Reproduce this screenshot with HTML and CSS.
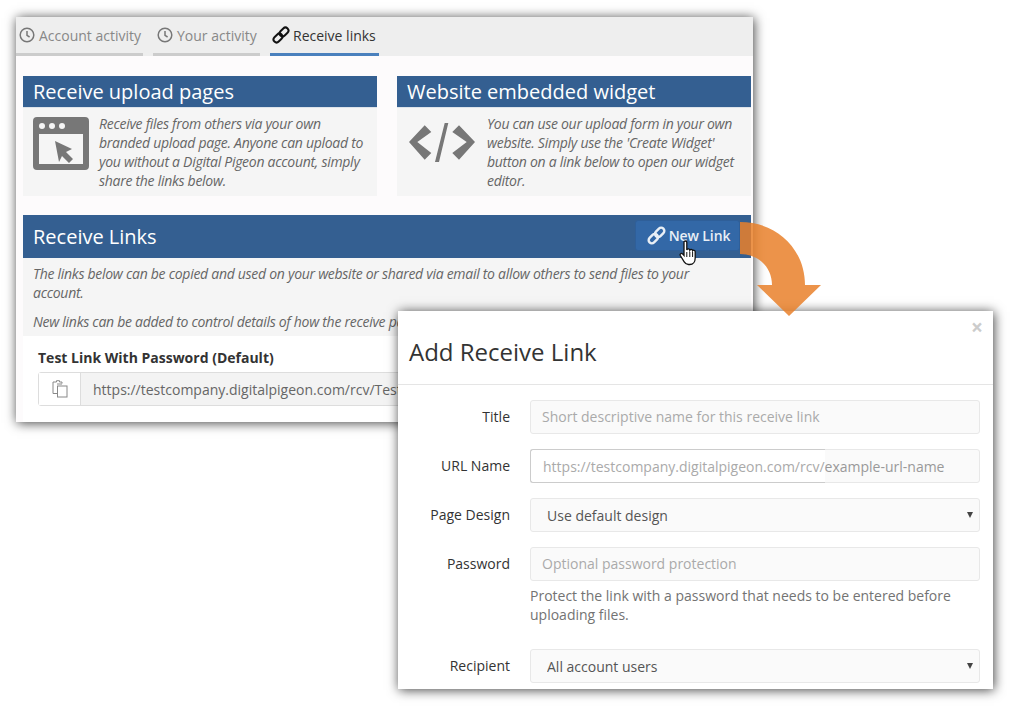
FILE: index.html
```html
<!DOCTYPE html>
<html lang="en">
<head>
  <meta charset="UTF-8" />
  <title>Add Receive Link</title>
  <link rel="stylesheet" href="styles.css">
</head>
<body>
  <div class="window back-window">
    <div class="tabs">
      <a class="tab tab-account">
        <svg class="tab-icon" viewBox="0 0 16 16"><circle cx="8" cy="8" r="6.8"/><path d="M8 4v4.400l2.600 1.600"/></svg>
        Account activity
      </a>
      <a class="tab tab-yours">
        <svg class="tab-icon" viewBox="0 0 16 16"><circle cx="8" cy="8" r="6.800"/><path d="M8 4v4.400l2.600 1.600"/></svg>
        Your activity
      </a>
      <a class="tab tab-active">
        <svg class="link-icon" viewBox="0 0 18 18"><rect x="1" y="9" width="10" height="6" rx="3" transform="rotate(-45 6 12)"/><rect x="7" y="3" width="10" height="6" rx="3" transform="rotate(-45 12 6)"/></svg>
        Receive links
      </a>
    </div>

    <div class="content">
      <div class="panels">
        <section class="panel">
          <h2>Receive upload pages</h2>
          <div class="panel-body">
            <svg class="panel-icon" width="56" height="53" viewBox="0 0 56 53">
              <path fill="#777" fill-rule="evenodd" d="M4 0h48a4 4 0 0 1 4 4v45a4 4 0 0 1-4 4H4a4 4 0 0 1-4-4V4a4 4 0 0 1 4-4zM6 17v30h44V17z"/>
              <circle cx="9" cy="9" r="3" fill="#f5f5f5"/><circle cx="19" cy="9" r="3" fill="#f5f5f5"/><circle cx="29" cy="9" r="3" fill="#f5f5f5"/>
              <path fill="#777" d="M22 24l17 8-6 3 7 7-4 4-7-7-3 6z"/>
            </svg>
            <p>Receive files from others via your own branded upload page. Anyone can upload to you without a Digital Pigeon account, simply share the links below.</p>
          </div>
        </section>
        <section class="panel">
          <h2>Website embedded widget</h2>
          <div class="panel-body code-body">
            <svg class="panel-icon" width="66" height="40" viewBox="0 0 66 40">
              <path fill="#777" d="M15.700 2.300L22.300 9 8.300 19l14 11-6.600 6.700L0 19zM50 2.300L43.300 9l14.400 10-14.400 11 6.700 6.700L66 19zM35.700 0h3.600L30 39h-4z"/>
            </svg>
            <p>You can use our upload form in your own website. Simply use the 'Create Widget' button on a link below to open our widget editor.</p>
          </div>
        </section>
      </div>

      <section class="links-section">
        <header class="links-header">
          <h2>Receive Links</h2>
          <button class="new-link">
            <svg class="link-icon" viewBox="0 0 18 18"><rect x="1" y="9" width="10" height="6" rx="3" transform="rotate(-45 6 12)"/><rect x="7" y="3" width="10" height="6" rx="3" transform="rotate(-45 12 6)"/></svg>
            New Link
          </button>
        </header>
        <div class="links-intro">
          <p>The links below can be copied and used on your website or shared via email to allow others to send files to your account.</p>
          <p>New links can be added to control details of how the receive page looks and behaves.</p>
        </div>
        <div class="link-card">
          <h3>Test Link With Password (Default)</h3>
          <div class="copy-group">
            <span class="copy-btn">
              <svg width="16" height="18" viewBox="0 0 16 18"><path d="M10 3.500V2H7.500V.7h-3V2H1v11.500h4"/><rect x="5.500" y="6" width="9.500" height="11"/><path d="M5 4h5"/></svg>
            </span>
            <input class="copy-url" type="text" readonly value="https://testcompany.digitalpigeon.com/rcv/Test-Link-With-Password">
          </div>
        </div>
      </section>
    </div>
  </div>

  <div class="window modal">
    <header class="modal-header">
      <span class="close">×</span>
      <h2>Add Receive Link</h2>
    </header>
    <form class="modal-form">
      <div class="form-row">
        <label>Title</label>
        <input type="text" placeholder="Short descriptive name for this receive link">
      </div>
      <div class="form-row">
        <label>URL Name</label>
        <div class="url-field">
          <span class="url-prefix">https://testcompany.digitalpigeon.com/rcv/</span><span class="url-name">example-url-name</span>
        </div>
      </div>
      <div class="form-row">
        <label>Page Design</label>
        <div class="select-wrap"><select><option>Use default design</option></select></div>
      </div>
      <div class="form-row">
        <label>Password</label>
        <div class="field-stack">
          <input type="text" placeholder="Optional password protection">
          <p class="help">Protect the link with a password that needs to be entered before uploading files.</p>
        </div>
      </div>
      <div class="form-row">
        <label>Recipient</label>
        <div class="select-wrap"><select><option>All account users</option></select></div>
      </div>
    </form>
  </div>

  <svg class="arrow" width="90" height="100" viewBox="0 0 90 100">
    <path d="M5 5C43 5 70 33 70 68H86L54 99 22 68H37C37 50 23 37 5 37Z"/>
  </svg>

  <svg class="cursor" width="18" height="26" viewBox="0 0 18 26">
    <path d="M5 2.200c0-1.600 2.800-1.600 2.800 0V10c.4-1.400 2.800-1.400 3 .2.500-1.100 2.600-1 2.800.5.600-.9 2.600-.6 2.600 1.100v6.200c0 3.500-2 6.500-5.500 6.500H9.500c-2.200 0-3.300-1-4.300-2.600L1.300 15.500c-.8-1.500 1-2.800 2.300-1.600L5 15.500z" fill="#fff" stroke="#111" stroke-width="1.300"/>
    <path d="M7.800 12v5M10.800 12v5M13.600 12v5" fill="none" stroke="#111"/>
  </svg>
</body>
</html>
```

FILE: styles.css
```css
* {
  margin: 0;
  padding: 0;
  box-sizing: border-box;
  font-family: 'Open Sans', sans-serif;
}
body, html {
  height: 100%;
  overflow: hidden;
}
body {
  background: #fff;
  color: #333;
  font-size: 14px;
}
.window {
  position: absolute;
  overflow: hidden;
  background: #fff;
  box-shadow: 1px 1px 11px rgba(0, 0, 0, 0.75);
}
.back-window {
  left: 16px;
  top: 17px;
  width: 737px;
  height: 405px;
  background: #fdfbfc;
}

/* tabs */
.tabs {
  display: flex;
  gap: 10px;
  height: 39px;
  background: #eee;
}
.tab {
  display: flex;
  align-items: center;
  gap: 4px;
  height: 39px;
  border-bottom: 3px solid #ccc;
  color: #888;
  white-space: nowrap;
}
.tab-account { width: 127px; padding-left: 3px; }
.tab-yours { width: 107px; padding-left: 4px; }
.tab-active {
  width: 109px;
  gap: 3px;
  padding-left: 2px;
  color: #333;
  border-bottom-color: #4a80bd;
}
.tab-icon {
  width: 16px;
  height: 16px;
  fill: none;
  stroke: #777;
  stroke-width: 1.5;
}
.link-icon {
  width: 18px;
  height: 18px;
  fill: none;
  stroke: currentColor;
  stroke-width: 2;
}
.tab-active .link-icon { stroke: #111; }

/* upper panels */
.content { padding: 20px 2px 0 7px; }
.panels {
  display: grid;
  grid-template-columns: 354px 354px;
  gap: 20px;
}
.panel { background: #f5f5f5; height: 120px; }
.panel h2 {
  height: 32px;
  line-height: 31px;
  padding-left: 10px;
  background: #345f91;
  border-bottom: 1px solid #dde3ea;
  color: #fff;
  font-size: 20px;
  font-weight: 400;
  white-space: nowrap;
}
.panel-body {
  display: flex;
  gap: 10px;
  padding: 6px 10px 0;
}
.panel-icon { flex: none; margin-top: 3px; }
.code-body { gap: 12px; padding-left: 12px; }
.code-body .panel-icon { margin-top: 9px; }
.panel-body p {
  font-style: italic;
  line-height: 19px;
  letter-spacing: -0.28px;
  color: #666;
}

/* receive links */
.links-section { margin-top: 19px; background: #f5f5f5; }
.links-header {
  display: flex;
  align-items: center;
  justify-content: space-between;
  height: 43px;
  padding: 0 11px 0 10px;
  background: #345f91;
}
.links-header h2 {
  color: #fff;
  font-size: 20px;
  font-weight: 400;
}
.new-link {
  display: flex;
  align-items: center;
  justify-content: center;
  gap: 3px;
  width: 105px;
  height: 31px;
  margin-bottom: 3px;
  padding-left: 2px;
  background: #3368a7;
  border: 1px solid #2f5f99;
  border-radius: 3px;
  color: #e9eff6;
  font-size: 14px;
  font-weight: 600;
  letter-spacing: -0.1px;
}
.new-link .link-icon {
  width: 19px;
  height: 19px;
  stroke-width: 2.3;
}
.links-intro { padding: 6px 10px 5px; }
.links-intro p {
  font-style: italic;
  line-height: 19px;
  letter-spacing: -0.28px;
  color: #666;
  margin-bottom: 10px;
}
.links-intro p:last-child { margin-bottom: 0; }
.link-card {
  background: #fff;
  padding: 12px 15px 16px;
  height: 90px;
}
.link-card h3 {
  font-size: 14px;
  font-weight: 700;
  line-height: 20px;
  margin-bottom: 4px;
}
.copy-group {
  display: flex;
  width: 680px;
  height: 34px;
  border: 1px solid #ddd;
  border-radius: 3px;
}
.copy-btn {
  display: flex;
  align-items: center;
  justify-content: center;
  width: 42px;
  background: #fff;
  border-right: 1px solid #ddd;
}
.copy-btn svg {
  fill: none;
  stroke: #888;
}
.copy-url {
  flex: 1;
  border: 0;
  padding: 0 12px;
  background: #f3f3f3;
  color: #666;
  font-size: 14px;
  outline: none;
}

/* modal */
.modal {
  left: 398px;
  top: 311px;
  width: 595px;
  height: 378px;
}
.modal-header {
  position: relative;
  height: 74px;
  padding: 25px 11px 0;
  border-bottom: 1px solid #e5e5e5;
}
.modal-header h2 {
  font-size: 24px;
  font-weight: 400;
  line-height: 32px;
  color: #333;
}
.close {
  position: absolute;
  right: 10px;
  top: 4px;
  font-size: 21px;
  font-weight: 700;
  line-height: 25px;
  color: #ccc;
}
.modal-form {
  display: flex;
  flex-direction: column;
  gap: 15px;
  padding: 15px 13px 0 0;
}
.form-row {
  display: grid;
  grid-template-columns: 112px 450px;
  column-gap: 20px;
}
.form-row label {
  text-align: right;
  line-height: 34px;
  color: #333;
}
.form-row input,
.form-row select,
.url-field {
  width: 100%;
  height: 34px;
  background: #fafafa;
  border: 1px solid #e8e8e8;
  border-radius: 3px;
  color: #555;
  font-size: 14px;
  outline: none;
}
.form-row input { padding: 0 11px 2px; }
.form-row input::placeholder { color: #aaa; }
.form-row select {
  appearance: none;
  padding: 0 24px 0 16px;
}
.select-wrap { position: relative; }
.select-wrap::after {
  content: "";
  position: absolute;
  right: 7px;
  top: 14px;
  border-left: 3.5px solid transparent;
  border-right: 3.5px solid transparent;
  border-top: 6px solid #444;
}
.url-field {
  display: flex;
  align-items: center;
  white-space: nowrap;
}
.url-prefix {
  display: flex;
  align-items: center;
  height: 34px;
  margin: -1px 0 -1px -1px;
  padding-left: 12px;
  background: #fff;
  border: 1px solid #ccc;
  border-right: 0;
  border-radius: 3px 0 0 3px;
  color: #aaa;
}
.url-name { color: #999; }
.help {
  margin-top: 5px;
  line-height: 19px;
  color: #737373;
}
.field-stack { padding-bottom: 10px; }

/* annotation arrow and pointer sit on top of both windows */
.arrow {
  position: absolute;
  left: 735px;
  top: 217px;
  fill: #e9812b;
  opacity: 0.85;
}
.cursor {
  position: absolute;
  left: 679px;
  top: 240px;
}
```
